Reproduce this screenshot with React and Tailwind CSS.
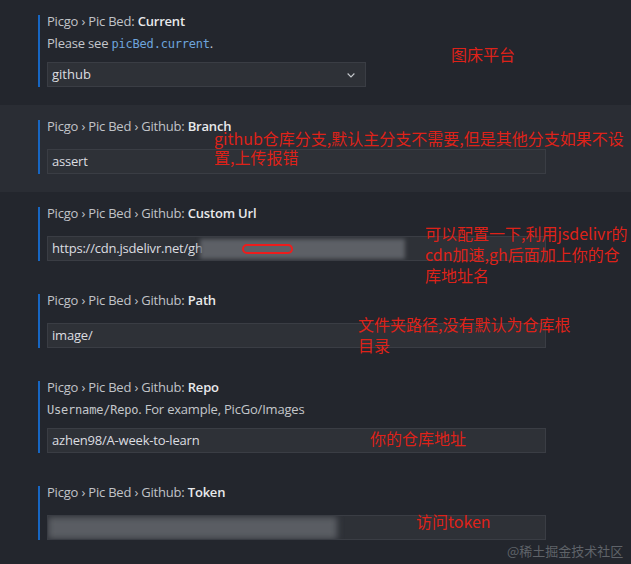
import React from 'react';

const mono = { fontFamily: '"DejaVu Sans Mono", monospace', fontSize: '12px' };
const cjk = { fontFamily: '"Noto Sans CJK SC", sans-serif' };

const Title = ({ path, name }) => (
    <div className="-mt-[2px] text-[13px] leading-[16px] font-medium tracking-[-0.2px] text-[#c0c3c8] whitespace-nowrap">
        {path} <span className="font-semibold text-[#e8e9eb]">{name}</span>
    </div>
);

const Setting = ({ path, name, desc, highlight, children }) => (
    <div className={`pl-[33px] pt-[15px] pb-[18px] ${highlight ? 'bg-[#2a2d34]' : ''}`}>
        <div className="ml-[5px] flex flex-col border-l-2 border-[#1766c2] pl-[7px]">
            <Title path={path} name={name} />
            {desc ? (
                <>
                    <div className="mt-[6px] text-[13px] leading-[16px] tracking-[-0.2px] text-[#c3c6cb] whitespace-nowrap">{desc}</div>
                    <div className="mt-[10px]">{children}</div>
                </>
            ) : (
                <div className="mt-[15px]">{children}</div>
            )}
        </div>
    </div>
);

const Input = ({ value, children }) => (
    <div className="relative h-[25px] w-[499px] bg-[#2e3137] border border-[#3a3d44] pl-[4px] flex items-center text-[13px] tracking-[-0.2px] text-[#dcdde0] whitespace-nowrap overflow-hidden">
        {value}
        {children}
    </div>
);

const Note = ({ className, children }) => (
    <div className={`absolute text-[16px] text-[#de2219] whitespace-nowrap ${className}`} style={cjk}>
        {children}
    </div>
);

const App = () => {
    const sep = ' \u203a ';
    return (
        <div
            className="relative flex flex-col w-[631px] h-[564px] overflow-hidden bg-[#23262d]"
            style={{ fontFamily: '"Open Sans", "Noto Sans", sans-serif' }}
        >
            <Setting
                path={`Picgo${sep}Pic Bed:`}
                name="Current"
                desc={
                    <>
                        Please see <span className="text-[#6ea4dc]" style={mono}>picBed.current</span>.
                    </>
                }
            >
                <div className="h-[25px] w-[319px] bg-[#2e3137] border border-[#3a3d44] pl-[4px] pr-[8px] flex items-center justify-between text-[13px] text-[#dcdde0]">
                    github
                    <svg width="12" height="12" viewBox="0 0 16 16" fill="none" stroke="#c5c8cc" strokeWidth="1.5">
                        <path d="M3.5 6l4.5 4.5L12.5 6" />
                    </svg>
                </div>
            </Setting>

            <Setting highlight path={`Picgo${sep}Pic Bed${sep}Github:`} name="Branch">
                <Input value="assert" />
            </Setting>

            <Setting path={`Picgo${sep}Pic Bed${sep}Github:`} name="Custom Url">
                <Input value="https://cdn.jsdelivr.net/gh">
                    <div className="absolute left-[152px] top-[2px] h-[20px] w-[205px] bg-[#5d6066] blur-[2px]" />
                    <div className="absolute left-[194px] top-[7px] h-[10px] w-[51px] rounded-full border-2 border-[#ee1c1c]" />
                </Input>
            </Setting>

            <Setting path={`Picgo${sep}Pic Bed${sep}Github:`} name="Path">
                <Input value="image/" />
            </Setting>

            <Setting
                path={`Picgo${sep}Pic Bed${sep}Github:`}
                name="Repo"
                desc={
                    <>
                        <span style={mono}>Username/Repo</span>. For example, PicGo/Images
                    </>
                }
            >
                <Input value="azhen98/A-week-to-learn" />
            </Setting>

            <Setting path={`Picgo${sep}Pic Bed${sep}Github:`} name="Token">
                <Input>
                    <div className="absolute left-0 top-[1px] h-[22px] w-[289px] bg-[#5a5d63] blur-[3px]" />
                </Input>
            </Setting>

            <Note className="left-[451px] top-[44px] leading-[20px]">图床平台</Note>
            <Note className="left-[214px] top-[129px] leading-[19px]">
                github仓库分支,默认主分支不需要,但是其他分支如果不设
                <br />
                置,上传报错
            </Note>
            <Note className="left-[425px] top-[223px] leading-[21px]">
                可以配置一下,利用jsdelivr的
                <br />
                cdn加速,gh后面加上你的仓
                <br />
                库地址名
            </Note>
            <Note className="left-[358px] top-[314px] leading-[21px]">
                文件夹路径,没有默认为仓库根
                <br />
                目录
            </Note>
            <Note className="left-[370px] top-[428px] leading-[20px]">你的仓库地址</Note>
            <Note className="left-[416px] top-[511px] leading-[20px]">访问token</Note>
            <div className="absolute left-[507px] top-[542px] text-[13px] leading-[18px] text-[#5f6369] whitespace-nowrap" style={cjk}>
                @稀土掘金技术社区
            </div>
        </div>
    );
};

export default App;
